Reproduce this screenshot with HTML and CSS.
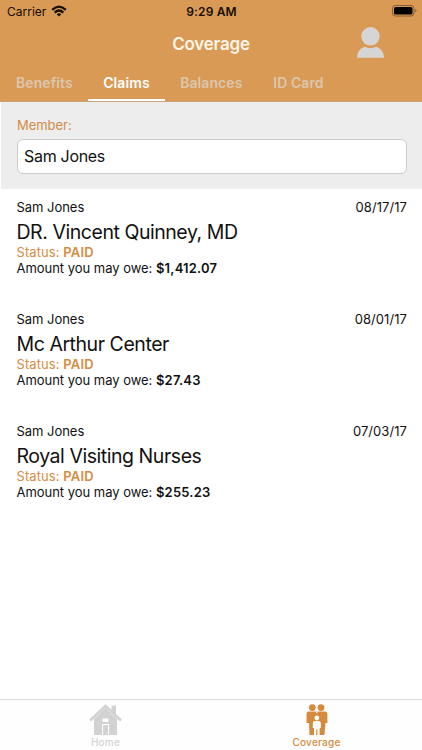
FILE: index.html
```html
<!DOCTYPE html>
<html lang="en">
<head>
<meta charset="utf-8">
<title>Coverage</title>
<link rel="stylesheet" href="styles.css">
</head>
<body>
<div class="app">
  <header class="header">
    <div class="status-bar">
      <div class="carrier"><span>Carrier</span>
        <svg class="wifi" viewBox="0 0 16 12"><g fill="none" stroke="#160e04" stroke-width="2.3"><path d="M1.2 4.8Q8-1.6 14.8 4.8"/><path d="M3.7 7.6Q8 3.5 12.3 7.6"/></g><path d="M5.7 9.2Q8 7.4 10.3 9.2L8 11.6Z" fill="#160e04"/></svg>
      </div>
      <span class="time">9:29 AM</span>
      <svg class="battery" viewBox="0 0 25 12"><rect x=".5" y=".5" width="21.5" height="10.5" rx="3" fill="none" stroke="#855c30"/><rect x="2" y="2" width="18.5" height="7.5" rx="1.6" fill="#000"/><path d="M23.3 4Q25.5 5.7 23.3 7.5Z" fill="#855c30"/></svg>
    </div>
    <div class="title-bar">
      <h1 class="title">Coverage</h1>
      <svg class="avatar" viewBox="0 0 27 31" fill="#d5d5d5"><ellipse cx="13.5" cy="9.3" rx="9.2" ry="9.3"/><path d="M0 30.8C0 25 3.5 21 8 19.8Q13.5 22.5 19 19.8C23.5 21 27 25 27 30.8Z"/></svg>
    </div>
    <nav class="tabs">
      <a class="tab"><span>Benefits</span></a>
      <a class="tab tab-active"><span>Claims</span></a>
      <a class="tab"><span>Balances</span></a>
      <a class="tab"><span>ID Card</span></a>
    </nav>
  </header>
  <section class="member">
    <label class="member-label">Member:</label>
    <div class="member-input"><span>Sam Jones</span></div>
  </section>
  <main class="claims">
    <article class="claim">
      <div class="claim-top"><span>Sam Jones</span><span class="date">08/17/17</span></div>
      <h2 class="provider">DR. Vincent Quinney, MD</h2>
      <div class="status">Status: <b>PAID</b></div>
      <div class="amount">Amount you may owe: <b>$1,412.07</b></div>
    </article>
    <article class="claim">
      <div class="claim-top"><span>Sam Jones</span><span class="date">08/01/17</span></div>
      <h2 class="provider">Mc Arthur Center</h2>
      <div class="status">Status: <b>PAID</b></div>
      <div class="amount">Amount you may owe: <b>$27.43</b></div>
    </article>
    <article class="claim">
      <div class="claim-top"><span>Sam Jones</span><span class="date">07/03/17</span></div>
      <h2 class="provider">Royal Visiting Nurses</h2>
      <div class="status">Status: <b>PAID</b></div>
      <div class="amount">Amount you may owe: <b>$255.23</b></div>
    </article>
  </main>
  <footer class="tab-bar">
    <a class="bar-item">
      <svg class="icon" viewBox="0 0 34 32"><path d="M1 16.5 16.5 2 32 16.5" fill="none" stroke="#d2d2d2" stroke-width="2.6"/><path d="M22.5 1.5H27V11L22.5 7Z" fill="#d2d2d2"/><path d="M16.5 4 28 15V31H5V15Z" fill="#d2d2d2"/><path d="M13.5 14.5H19.5V18H13.5ZM13 20H20V31H13Z" fill="#fff"/><path d="M14 21H19V31H14Z" fill="#d2d2d2"/></svg>
      <span>Home</span>
    </a>
    <a class="bar-item bar-active">
      <svg class="icon" viewBox="0 0 34 32"><g fill="#d58a3d"><circle cx="12.3" cy="3.6" r="3.4"/><circle cx="21" cy="3.6" r="3.4"/><path d="M8.5 7.6H25Q27.4 7.6 27.4 10.3V19H25.5L24.5 31H9.5L9 19H6.5V10.3Q6.5 7.6 8.5 7.6Z"/></g><g fill="#fff"><path d="M15.5 7.5 16.7 9.5 18 7.5Z"/><circle cx="16.8" cy="14" r="2.4"/><path d="M14.6 17H19Q20.8 17 20.8 19V24H19.6V31.5H17.4V25.5H16.2V31.5H14V24H12.8V19Q12.8 17 14.6 17Z"/></g></svg>
      <span>Coverage</span>
    </a>
  </footer>
</div>
</body>
</html>
```
FILE: styles.css
```css
* { box-sizing: border-box; }
body { margin: 0; font-family: Inter, "Liberation Sans", sans-serif; color: #111; background: #fff; }
h1, h2 { margin: 0; }
svg { display: block; }
b { font-weight: 600; letter-spacing: .2px; }
.app { height: 750px; display: flex; flex-direction: column; }
.header { height: 102px; background: #d99a55; border-bottom: 1px solid #c9a377; }
.status-bar { height: 22px; padding: 0 6px 0 7px; display: grid; grid-template-columns: 1fr auto 1fr; align-items: center; color: #160e04; font-size: 12px; }
.carrier { display: flex; align-items: center; gap: 5px; letter-spacing: 0; }
.wifi { width: 16px; height: 12px; margin-top: -1px; }
.time { font-weight: 600; letter-spacing: .15px; }
.battery { width: 25px; height: 12px; justify-self: end; margin: -1px -1px 0 0; }
.title-bar { height: 43px; padding: 5px 38px 0; display: grid; grid-template-columns: 1fr auto 1fr; }
.title { grid-column: 2; font-size: 17px; line-height: 34px; font-weight: 600; color: #fff5e8; letter-spacing: -.2px; }
.avatar { width: 27px; height: 31px; justify-self: end; }
.tabs { height: 36px; padding-left: 1px; display: flex; }
.tab { padding: 0 15px; font-size: 14px; line-height: 36px; font-weight: 600; color: #dcc6ad; letter-spacing: .08px; }
.tab-active { padding: 0 15.5px; color: #fff; border-bottom: 2px solid #fff; }
.tab:last-child { margin-left: .7px; }
.member { height: 87px; margin-left: 1px; padding: 13px 15px 0 16px; background: #ededed; }
.member-label { display: block; height: 24px; line-height: 20px; font-size: 13px; color: #d18b45; letter-spacing: -.03px; }
.member-input { height: 35px; padding-left: 6px; border: 1px solid #ccc; border-radius: 6px; background: #fff; font-size: 16px; line-height: 33px; letter-spacing: -.3px; }
.claims { flex: 1; padding: 10.3px 15px 0 16.5px; }
.claim { height: 111.7px; font-size: 13px; line-height: 16px; letter-spacing: -.03px; }
.claim-top { display: flex; justify-content: space-between; line-height: 17px; }
.date { letter-spacing: .07px; }
.provider { font-size: 19.5px; line-height: 28px; font-weight: 400; padding-top: 2px; height: 28px; letter-spacing: -.45px; }
.status { color: #d58d43; height: 16px; letter-spacing: .07px; }
.tab-bar { height: 51px; border-top: 1px solid #d8d8d8; display: grid; grid-template-columns: 1fr 1fr; background: #fefefe; }
.bar-item { display: flex; flex-direction: column; align-items: center; padding-top: 4px; color: #d3d3d3; font-size: 10px; line-height: 12px; font-weight: 500; letter-spacing: .25px; }
.icon { width: 34px; height: 32px; }
.bar-active { color: #d58a3d; }
```
